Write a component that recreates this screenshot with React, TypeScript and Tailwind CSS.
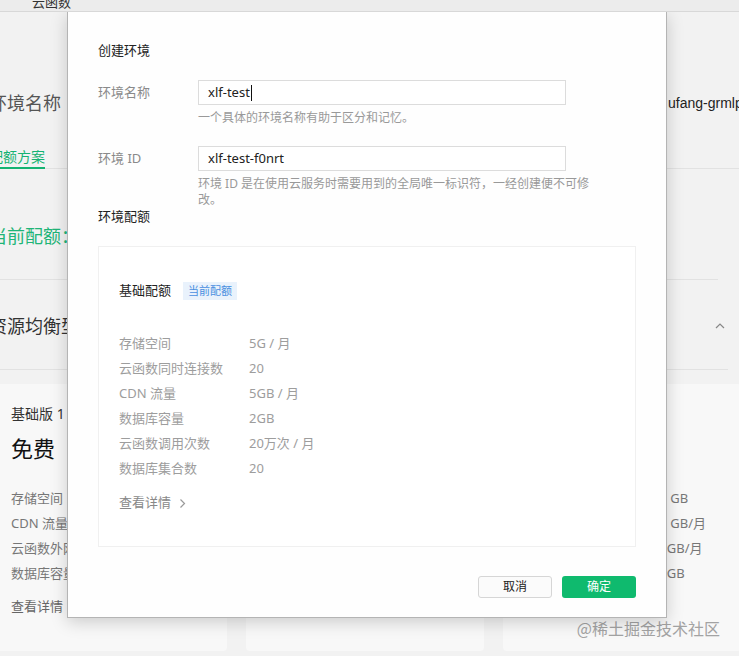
import React from "react";

const rowsBox: [string, string][] = [
  ["存储空间", "5G / 月"],
  ["云函数同时连接数", "20"],
  ["CDN 流量", "5GB / 月"],
  ["数据库容量", "2GB"],
  ["云函数调用次数", "20万次 / 月"],
  ["数据库集合数", "20"],
];

function ChevronRight() {
  return (
    <svg width="7" height="11" viewBox="0 0 7 11" fill="none">
      <path d="M1.5 1.5 L5.5 5.5 L1.5 9.5" stroke="#9a9a9a" strokeWidth="1.2" />
    </svg>
  );
}

function Card({ title, price, rows }: { title: string; price: string; rows: React.ReactNode[] }) {
  return (
    <div className="h-[267px] rounded-[4px] bg-[#f8f8f8] px-[22px] pt-[20px]">
      <div className="text-[14px] leading-[20px] text-[#333]">{title}</div>
      <div className="mt-[9px] text-[22px] leading-[30px] text-[#111]">{price}</div>
      <div className="mt-[23px] flex flex-col">
        {rows.map((r, i) => (
          <div key={i} className="h-[25px] text-[13px] leading-[25px] text-[#777] whitespace-nowrap">
            {r}
          </div>
        ))}
      </div>
      <div className="mt-[8px] text-[13px] leading-[25px] text-[#666]">查看详情</div>
    </div>
  );
}

export default function App() {
  return (
    <div className="relative w-[739px] h-[656px] overflow-hidden bg-[#f2f2f2] font-['Noto_Sans','Noto_Sans_CJK_SC',sans-serif]">
      {/* header */}
      <div className="relative z-20 h-[12px] overflow-hidden bg-[#ececec] border-b border-[#d8d8d8]">
        <div className="-mt-[8px] pl-[32px] text-[13px] leading-[20px] text-[#333]">云函数</div>
      </div>

      {/* background page */}
      <div className="-ml-[11px] w-[750px]">
        <div className="pt-[78px] flex h-[104px] items-start">
          <div className="h-[26px] w-[679px] shrink-0 text-[18px] leading-[26px] text-[#555]">环境名称</div>
          <div className="h-[26px] shrink-0 text-[14px] leading-[26px] text-[#222] whitespace-nowrap font-['Liberation_Sans',sans-serif]">ufang-grmlp4</div>
        </div>
        <div className="mt-[31px] flex border-b border-[#e2e2e2]">
          <div className="border-b-2 border-[#15b372] text-[14px] leading-[20px] text-[#15b372] -mb-px">配额方案</div>
        </div>
        <div className="mr-[21px] border-b border-[#e2e2e2] pt-[54px] pb-[30px]">
          <div className="text-[18px] leading-[26px] text-[#1fb578]">当前配额：</div>
        </div>
        <div className="mr-[11px] flex items-center justify-between border-b border-[#e2e2e2] pt-[33px] pb-[30px]">
          <div className="text-[18px] leading-[26px] text-[#333]">资源均衡型</div>
          <svg width="10" height="6" viewBox="0 0 10 6" className="mr-[3px]">
            <path d="M1 5 L5 1 L9 5" stroke="#888" strokeWidth="1.2" fill="none" />
          </svg>
        </div>
        <div className="mt-[14px] grid grid-cols-[238px_238px_238px] gap-[19px]">
          <Card
            title="基础版 1"
            price="免费"
            rows={["存储空间", "CDN 流量", "云函数外网出流量", "数据库容量"]}
          />
          <Card title="基础版 2" price="¥ 19.9" rows={["存储空间", "CDN 流量", "云函数外网出流量", "数据库容量"]} />
          <Card
            title="专业版"
            price="¥ 99"
            rows={[
              <span key="a" className="flex"><span className="w-[127px]">存储空间</span><span><span className="text-[#2b7de0]">10</span> GB</span></span>,
              <span key="b" className="flex"><span className="w-[127px]">CDN 流量</span><span><span className="text-[#2b7de0]">10</span> GB/月</span></span>,
              <span key="c" className="flex"><span className="w-[127px]">云函数外网出流量</span><span>20GB/月</span></span>,
              <span key="d" className="flex"><span className="w-[127px]">数据库容量</span><span>20GB</span></span>,
            ]}
          />
        </div>
      </div>

      {/* watermark */}
      <div className="absolute right-[19px] bottom-[17px] text-[16px] leading-[22px] text-[#a3a3a3] font-['Noto_Sans_CJK_SC',sans-serif]">
        @稀土掘金技术社区
      </div>

      {/* dialog */}
      <div className="absolute left-[67px] top-[12px] z-10 box-border h-[606px] w-[600px] border border-t-0 border-[#b4b4b4] bg-[#fefefe] px-[30px] pt-[28px] shadow-[0_4px_16px_rgba(0,0,0,0.18)]">
        <div className="text-[13px] leading-[20px] text-[#222]">创建环境</div>

        <div className="mt-[20px] flex items-center">
          <div className="w-[100px] text-[13px] text-[#8a8a8a]">环境名称</div>
          <div className="flex h-[25px] w-[368px] items-center border border-[#dcdcdc] bg-white pl-[9px] text-[13px] text-[#222]">
            xlf-test<span className="ml-px h-[16px] w-px bg-[#111]" />
          </div>
        </div>
        <div className="ml-[100px] mt-[4px] text-[12px] leading-[17px] text-[#999]">一个具体的环境名称有助于区分和记忆。</div>

        <div className="mt-[20px] flex items-center">
          <div className="w-[100px] text-[13px] text-[#8a8a8a]">环境 ID</div>
          <div className="flex h-[25px] w-[368px] items-center border border-[#dcdcdc] bg-white pl-[9px] text-[13px] text-[#222]">
            xlf-test-f0nrt
          </div>
        </div>
        <div className="ml-[100px] mt-[5px] text-[12px] leading-[16px] text-[#999]">
          <div className="whitespace-nowrap">环境 ID 是在使用云服务时需要用到的全局唯一标识符，一经创建便不可修</div>
          <div>改。</div>
        </div>

        <div className="text-[13px] leading-[16px] text-[#222]">环境配额</div>

        <div className="mt-[22px] h-[301px] border border-[#f0f0f0] bg-white pl-[20px] pt-[35px]">
          <div className="flex h-[18px] items-center gap-[12px]">
            <span className="text-[13px] text-[#222]">基础配额</span>
            <span className="flex h-[18px] items-center bg-[#e9f2fc] px-[5px] text-[11px] text-[#4a8fe0]">当前配额</span>
          </div>
          <div className="mt-[31px] flex flex-col">
            {rowsBox.map(([k, v]) => (
              <div key={k} className="flex h-[25px] items-center text-[13px] text-[#9d9d9d]">
                <span className="w-[130px]">{k}</span>
                <span>{v}</span>
              </div>
            ))}
          </div>
          <div className="mt-[12px] flex h-[20px] items-center gap-[8px] text-[13px] text-[#888]">
            查看详情
            <ChevronRight />
          </div>
        </div>

        <div className="mt-[29px] flex justify-end gap-[10px]">
          <button className="h-[22px] w-[74px] rounded-[3px] border border-[#d6d6d6] bg-[#fbfbfb] text-[12px] text-[#222]">取消</button>
          <button className="h-[22px] w-[74px] rounded-[3px] bg-[#0fba6e] text-[12px] text-white">确定</button>
        </div>
      </div>
    </div>
  );
}
